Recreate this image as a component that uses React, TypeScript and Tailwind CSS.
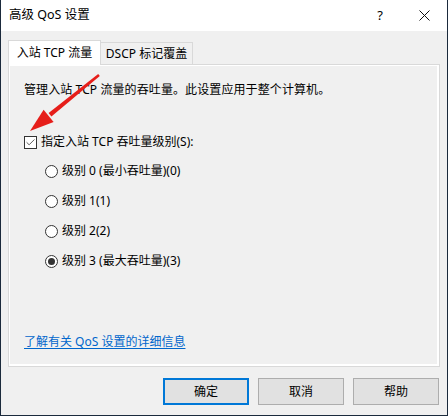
import { Check } from 'lucide-react'

const font = {
  fontFamily: '"Noto Sans", "Noto Sans CJK SC", sans-serif',
}

const levels = [
  { label: '级别 0 (最小吞吐量)(0)', checked: false },
  { label: '级别 1(1)', checked: false },
  { label: '级别 2(2)', checked: false },
  { label: '级别 3 (最大吞吐量)(3)', checked: true },
]

function Radio({ checked }: { checked: boolean }) {
  return (
    <span className="grid h-[13px] w-[13px] place-items-center rounded-full border border-[#333] bg-white">
      {checked && <span className="block h-[7px] w-[7px] rounded-full bg-[#333]" />}
    </span>
  )
}

function Arrow() {
  // tail (98,75) -> tip (29,131)
  return (
    <svg className="pointer-events-none absolute left-0 top-0" width="448" height="416" viewBox="0 0 448 416">
      <polygon points="98.8,75.9 97.2,74.1 47.6,113.1 50.4,116.5" fill="#e61e1a" />
      <polygon points="29,131 42.6,109.7 52.6,122.1" fill="#e61e1a" />
    </svg>
  )
}

export default function App() {
  return (
    <div
      style={font}
      className="relative flex h-[416px] w-[448px] flex-col border-x border-b border-[#1b2a3c] bg-[#f0f0f0] text-[12px] text-black"
    >
      <div className="flex h-[31px] items-center bg-white pl-[8px]">
        <span className="text-[12.5px]">高级 QoS 设置</span>
        <span className="ml-auto mr-[36px] text-[13px]">?</span>
        <svg width="11" height="11" viewBox="0 0 11 11" className="mr-[17px]">
          <path d="M0.5 0.5L10.5 10.5M10.5 0.5L0.5 10.5" stroke="#111" strokeWidth="1" />
        </svg>
      </div>

      <div className="px-[7px] pt-[9px]">
        <div className="flex h-[24px] items-end">
          <div className="relative z-10 -mb-px flex h-[25px] w-[93px] items-center justify-center border border-b-0 border-[#d9d9d9] bg-white">
            入站 TCP 流量
          </div>
          <div className="flex h-[22px] w-[92px] items-center justify-center border border-l-0 border-b-0 border-[#d9d9d9] bg-[#f0f0f0]">
            DSCP 标记覆盖
          </div>
        </div>

        <div className="flex h-[303px] flex-col border border-[#d9d9d9] pl-[15px] pt-[16px] shadow-[inset_1px_1px_0_white,inset_-2px_-2px_0_white]">
          <p className="leading-[18px] tracking-[0.1px]">管理入站 TCP 流量的吞吐量。此设置应用于整个计算机。</p>

          <label className="mt-[34px] flex items-center gap-[4px] leading-[18px]">
            <span className="grid h-[13px] w-[13px] place-items-center border border-[#333] bg-white">
              <Check size={11} strokeWidth={1.6} color="#222" />
            </span>
            指定入站 TCP 吞吐量级别(S):
          </label>

          <div className="mt-[11px] flex flex-col gap-[12px] pl-[21px]">
            {levels.map((l) => (
              <div key={l.label} className="flex items-center gap-[4px] leading-[18px]">
                <Radio checked={l.checked} />
                {l.label}
              </div>
            ))}
          </div>

          <a href="#" className="mt-[63px] self-start leading-[18px] text-[#0066cc] underline underline-offset-2">
            了解有关 QoS 设置的详细信息
          </a>
        </div>

        <div className="mt-[11px] flex justify-end gap-[9px] pr-[1px]">
          <button className="h-[27px] w-[86px] border-2 border-[#0078d7] bg-[#e1e1e1]">确定</button>
          <button className="h-[27px] w-[86px] border border-[#adadad] bg-[#e1e1e1]">取消</button>
          <button className="h-[27px] w-[86px] border border-[#adadad] bg-[#e1e1e1]">帮助</button>
        </div>
      </div>

      <Arrow />
    </div>
  )
}
